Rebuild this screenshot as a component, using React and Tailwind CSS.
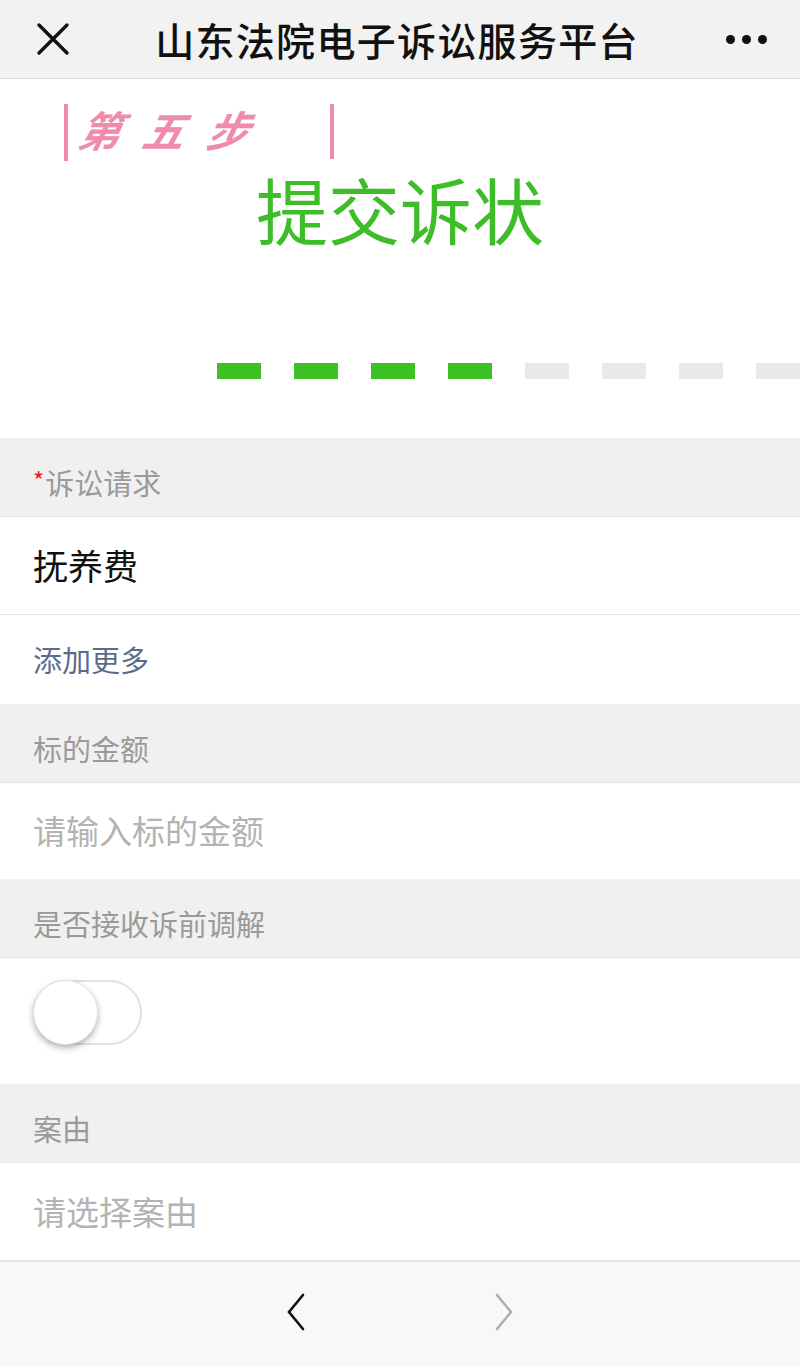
const cjk = { fontFamily: '"Noto Sans CJK SC", "Noto Sans", sans-serif' };

function SectionHeader({ children, required }) {
  return (
    <div className="h-[79px] bg-[#f0f0f0] border-b border-[#e3e3e3] flex items-center pl-[33px] pt-[12px] text-[29px] text-[#9a9a9a]">
      {required && <span className="text-[#e02020] text-[24px] -mt-[6px] mr-[1px]">*</span>}
      {children}
    </div>
  );
}

function Row({ children, className = "", height = "h-[96px]" }) {
  return (
    <div className={`${height} bg-white flex items-center pl-[33px] ${className}`}>{children}</div>
  );
}

export default function App() {
  const done = [0, 1, 2, 3];
  const dashes = [0, 1, 2, 3, 4, 5, 6, 7];
  return (
    <div className="w-[800px] h-[1366px] bg-white flex flex-col overflow-hidden" style={cjk}>
      {/* top bar */}
      <div className="h-[79px] bg-[#f2f2f2] border-b border-[#dcdcdc] flex items-center justify-between px-[36px] shrink-0">
        <svg width="34" height="34" viewBox="0 0 34 34">
          <path d="M3 3 L31 31 M31 3 L3 31" stroke="#111" strokeWidth="3.4" strokeLinecap="round" />
        </svg>
        <div className="text-[39px] text-[#111] font-medium tracking-[1.3px] mr-[2px]">山东法院电子诉讼服务平台</div>
        <div className="flex gap-[7px] mr-[-3px]">
          <span className="w-[9px] h-[9px] rounded-full bg-[#111]" />
          <span className="w-[9px] h-[9px] rounded-full bg-[#111]" />
          <span className="w-[9px] h-[9px] rounded-full bg-[#111]" />
        </div>
      </div>

      {/* step banner */}
      <div className="h-[359px] bg-white shrink-0 flex flex-col">
        <div className="flex items-start pt-[25px] pl-[64px]">
          <span className="w-[4px] h-[57px] bg-[#f08cab]" />
          <span className="text-[42px] font-bold italic text-[#f08cab] leading-none mt-[4px] ml-[12px] tracking-[22px] -skew-x-12">第五步</span>
          <span className="w-[4px] h-[55px] bg-[#f08cab] ml-[58px]" />
        </div>
        <div className="pl-[256px] text-[72px] text-[#3dbe29] leading-none mt-[11px]">提交诉状</div>
        <div className="flex gap-[33px] pl-[217px] mt-[119px]">
          {dashes.map((i) => (
            <span
              key={i}
              className={`w-[44px] h-[16px] shrink-0 ${done.includes(i) ? "bg-[#3cc127]" : "bg-[#e9e9e9]"}`}
            />
          ))}
        </div>
      </div>

      <SectionHeader required>诉讼请求</SectionHeader>
      <Row className="border-b border-[#e3e3e3] text-[35px] text-[#111]" height="h-[98px]">抚养费</Row>
      <Row className="text-[29px] text-[#5b6b8c]" height="h-[89px]">添加更多</Row>

      <SectionHeader>标的金额</SectionHeader>
      <Row className="text-[33px] text-[#b3b3b3]" height="h-[96px]">请输入标的金额</Row>

      <SectionHeader>是否接收诉前调解</SectionHeader>
      <Row height="h-[126px] items-start pt-[22px]">
        <div className="relative w-[109px] h-[65px] rounded-full border-2 border-[#e2e2e2] bg-white">
          <span className="absolute left-[-2px] top-[-2px] w-[65px] h-[65px] rounded-full bg-white shadow-[0_3px_6px_rgba(0,0,0,0.3)] border border-[#e4e4e4]" />
        </div>
      </Row>

      <SectionHeader>案由</SectionHeader>
      <Row className="text-[33px] text-[#b3b3b3]" height="h-[97px]">请选择案由</Row>

      {/* bottom nav */}
      <div className="flex-1 bg-[#f8f8f9] border-t-2 border-[#e3e3e3] flex items-center justify-center gap-[186px] pb-[4px]">
        <svg width="22" height="40" viewBox="0 0 22 40">
          <path d="M18 3 L4 20 L18 37" fill="none" stroke="#111" strokeWidth="2.6" strokeLinecap="round" />
        </svg>
        <svg width="22" height="40" viewBox="0 0 22 40">
          <path d="M4 3 L18 20 L4 37" fill="none" stroke="#b0b0b0" strokeWidth="2.6" strokeLinecap="round" />
        </svg>
      </div>
    </div>
  );
}
